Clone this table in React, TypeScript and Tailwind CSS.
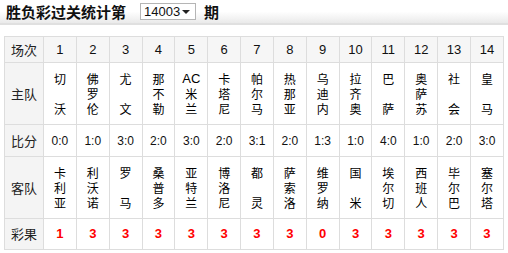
const matches = [
  { no: 1, home: ["切", "", "沃"], score: "0:0", away: ["卡", "利", "亚"], result: "1" },
  { no: 2, home: ["佛", "罗", "伦"], score: "1:0", away: ["利", "沃", "诺"], result: "3" },
  { no: 3, home: ["尤", "", "文"], score: "3:0", away: ["罗", "", "马"], result: "3" },
  { no: 4, home: ["那", "不", "勒"], score: "2:0", away: ["桑", "普", "多"], result: "3" },
  { no: 5, home: ["AC", "米", "兰"], score: "3:0", away: ["亚", "特", "兰"], result: "3" },
  { no: 6, home: ["卡", "塔", "尼"], score: "2:0", away: ["博", "洛", "尼"], result: "3" },
  { no: 7, home: ["帕", "尔", "马"], score: "3:1", away: ["都", "", "灵"], result: "3" },
  { no: 8, home: ["热", "那", "亚"], score: "2:0", away: ["萨", "索", "洛"], result: "3" },
  { no: 9, home: ["乌", "迪", "内"], score: "1:3", away: ["维", "罗", "纳"], result: "0" },
  { no: 10, home: ["拉", "齐", "奥"], score: "1:0", away: ["国", "", "米"], result: "3" },
  { no: 11, home: ["巴", "", "萨"], score: "4:0", away: ["埃", "尔", "切"], result: "3" },
  { no: 12, home: ["奥", "萨", "苏"], score: "1:0", away: ["西", "班", "人"], result: "3" },
  { no: 13, home: ["社", "", "会"], score: "2:0", away: ["毕", "尔", "巴"], result: "3" },
  { no: 14, home: ["皇", "", "马"], score: "3:0", away: ["塞", "尔", "塔"], result: "3" },
];

const cn = "font-['SimSun','Noto_Sans_CJK_SC',sans-serif]";
const num = "font-['Liberation_Sans','Noto_Sans_CJK_SC',sans-serif]";

// team names are stacked one char per line, 2-char names leave the middle line empty
function TeamName({ lines }: { lines: string[] }) {
  return (
    <div className={`flex flex-col items-center text-[12px] text-black ${cn}`}>
      {lines.map((l, i) => (
        <span key={i} className={`h-[15px] leading-[15px] ${l === "AC" ? num + " text-[13px]" : ""}`}>
          {l}
        </span>
      ))}
    </div>
  );
}

export default function App() {
  const label = `border border-[#dddddd] bg-[#f4f4f4] text-center text-[13px] text-[#222] font-normal ${cn}`;
  const cell = "border border-[#dddddd] text-center p-0";

  return (
    <div className="w-[508px] h-[253px] bg-white overflow-hidden">
      {/* header bar */}
      <div className="h-[25px] border-b-2 border-[#e0e0e0] bg-gradient-to-b from-white via-white to-[#eaeaea] flex items-center pl-[6px]">
        <h1 className={`text-[15px] font-bold text-[#111] leading-none ${cn}`}>胜负彩过关统计第</h1>
        <div className="ml-[14px] h-[17px] w-[56px] border border-[#b5b5b5] bg-white flex items-center justify-between pl-[3px] pr-[5px]">
          <span className={`text-[13px] leading-none text-[#111] ${num}`}>14003</span>
          <span className="w-0 h-0 border-l-[4px] border-r-[4px] border-t-[4px] border-l-transparent border-r-transparent border-t-[#222]" />
        </div>
        <span className={`ml-[8px] text-[15px] font-bold text-[#111] leading-none ${cn}`}>期</span>
      </div>

      {/* stats table */}
      <table className="mt-[11px] ml-[4px] w-[500px] table-fixed border-collapse">
        <colgroup>
          <col className="w-[39px]" />
          {matches.map((m) => (
            <col key={m.no} />
          ))}
        </colgroup>
        <tbody>
          <tr className="h-[26px] bg-[#f6f6f6]">
            <th className={label}>场次</th>
            {matches.map((m) => (
              <td key={m.no} className={`${cell} text-[13px] text-[#111] ${num}`}>
                {m.no}
              </td>
            ))}
          </tr>
          <tr className="h-[62px]">
            <th className={label}>主队</th>
            {matches.map((m) => (
              <td key={m.no} className={cell}>
                <TeamName lines={m.home} />
              </td>
            ))}
          </tr>
          <tr className="h-[32px]">
            <th className={label}>比分</th>
            {matches.map((m) => (
              <td key={m.no} className={`${cell} text-[12px] text-[#111] ${num}`}>
                {m.score}
              </td>
            ))}
          </tr>
          <tr className="h-[62px]">
            <th className={label}>客队</th>
            {matches.map((m) => (
              <td key={m.no} className={cell}>
                <TeamName lines={m.away} />
              </td>
            ))}
          </tr>
          <tr className="h-[31px]">
            <th className={label}>彩果</th>
            {matches.map((m) => (
              <td key={m.no} className={`${cell} text-[13px] font-bold text-[#ff0000] ${num}`}>
                {m.result}
              </td>
            ))}
          </tr>
        </tbody>
      </table>
    </div>
  );
}
